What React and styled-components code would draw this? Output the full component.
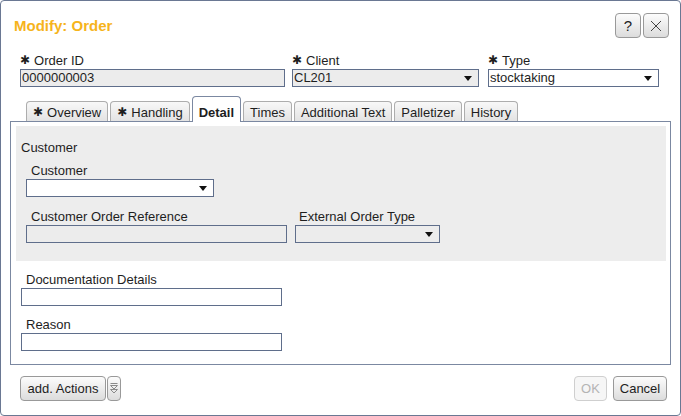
import React from 'react';
import styled, { createGlobalStyle } from 'styled-components';

const EDGE = '#6a7893';
const FIELD_EDGE = '#5f6e8b';

const GlobalStyle = createGlobalStyle`
  html, body {
    margin: 0;
    padding: 0;
    background: #fff;
  }
  body {
    font-family: "Liberation Sans", Arial, sans-serif;
    font-size: 13px;
    color: #1e1e1e;
  }
  * {
    box-sizing: border-box;
  }
`;

const Dialog = styled.div`
  width: 681px;
  height: 416px;
  border: 1px solid ${EDGE};
  border-radius: 4px;
  display: flex;
  flex-direction: column;
  background: #fff;
`;

const Header = styled.div`
  display: flex;
  align-items: center;
  justify-content: space-between;
  height: 37px;
  padding: 12px 11px 0 13px;
`;

const Title = styled.h1`
  margin: 0;
  font-size: 15px;
  font-weight: bold;
  color: #f6b41c;
  line-height: 18px;
`;

const HeaderTools = styled.div`
  display: flex;
  gap: 2px;
`;

const Button = styled.button`
  height: 25px;
  width: ${(p) => p.$w}px;
  padding: 0;
  margin: 0;
  display: flex;
  align-items: center;
  justify-content: center;
  font-family: "Liberation Sans", Arial, sans-serif;
  font-size: ${(p) => (p.$big ? 15 : 13)}px;
  color: ${(p) => (p.disabled ? '#b4b4b4' : '#1e1e1e')};
  border: 1px solid ${(p) => (p.disabled ? '#cfcfcf' : '#999')};
  border-radius: 4px;
  background: ${(p) =>
    p.disabled ? '#f6f6f6' : 'linear-gradient(#fcfcfc, #dcdcdc)'};
`;

const FieldRow = styled.div`
  display: flex;
  margin-top: 15px;
  padding-left: 19px;
`;

const Field = styled.div`
  width: ${(p) => p.$w}px;
  margin-right: ${(p) => p.$mr || 0}px;
  margin-left: ${(p) => p.$ml || 0}px;
  margin-top: ${(p) => p.$mt || 0}px;
`;

const Label = styled.div`
  line-height: 16px;
  height: 16px;
  padding-left: ${(p) => p.$indent || 0}px;
  white-space: nowrap;
`;

const Star = styled.span`
  display: inline-block;
  font-family: "DejaVu Sans", sans-serif;
  font-size: 12px;
  line-height: 12px;
  margin-right: 4px;
  vertical-align: 1px;
`;

const Box = styled.div`
  height: 18px;
  width: ${(p) => p.$w}px;
  border: 1px solid ${FIELD_EDGE};
  background: ${(p) => (p.$gray ? '#ececec' : '#fff')};
  display: flex;
  align-items: center;
  justify-content: space-between;
  padding: 0 6px 0 1px;
  line-height: 16px;
  white-space: nowrap;
`;

const Arrow = styled.span`
  width: 0;
  height: 0;
  border-left: 4px solid transparent;
  border-right: 4px solid transparent;
  border-top: 5px solid #111;
`;

const TabBar = styled.div`
  display: flex;
  align-items: flex-end;
  gap: 2px;
  height: 24px;
  margin-top: 10px;
  padding-left: 25px;
`;

const Tab = styled.div`
  position: relative;
  z-index: ${(p) => (p.$active ? 1 : 0)};
  padding: ${(p) => (p.$active ? '8px 6px 1px' : '3px 6px 0')};
  margin-bottom: ${(p) => (p.$active ? -1 : 0)}px;
  line-height: 16px;
  font-weight: ${(p) => (p.$active ? 'bold' : 'normal')};
  border: 1px solid ${(p) => (p.$active ? '#7b88a1' : '#adadad')};
  border-bottom: none;
  border-radius: 4px 4px 0 0;
  background: ${(p) =>
    p.$active ? '#fff' : 'linear-gradient(#f8f8f8, #e3e3e3)'};
  white-space: nowrap;
`;

const Panel = styled.div`
  flex: 1;
  margin: 0 9px;
  border: 1px solid #7b88a1;
  padding: 4px 4px 0 5px;
`;

const Section = styled.div`
  background: #ededed;
  padding: 14px 4px 18px 5px;
`;

const SectionTitle = styled.div`
  line-height: 16px;
`;

const SubBlock = styled.div`
  padding-left: 5px;
`;

const Row = styled.div`
  display: flex;
  gap: 8px;
  margin-top: ${(p) => p.$mt || 0}px;
`;

const Footer = styled.div`
  height: 50px;
  flex-shrink: 0;
  display: flex;
  align-items: flex-start;
  justify-content: space-between;
  padding: 11px 13px 0 19px;
`;

const ButtonGroup = styled.div`
  display: flex;
  gap: ${(p) => p.$gap}px;
`;

const CloseIcon = () => (
  <svg width="12" height="12" viewBox="0 0 12 12">
    <path d="M1 1 L11 11 M11 1 L1 11" stroke="#444" strokeWidth="1" />
  </svg>
);

const MoreIcon = () => (
  <svg width="8" height="11" viewBox="0 0 8 11">
    <path
      d="M0.5 0.5 H7.5 M0.5 2.5 H7.5 L4 6 Z M0.5 6.5 H7.5 L4 10 Z"
      stroke="#8a8a8a"
      strokeWidth="1"
      strokeLinejoin="round"
      fill="none"
    />
  </svg>
);

const Input = ({ w, gray, value }) => (
  <Box $w={w} $gray={gray}>
    <span>{value}</span>
  </Box>
);

const Select = ({ w, gray, value }) => (
  <Box $w={w} $gray={gray}>
    <span>{value}</span>
    <Arrow />
  </Box>
);

const tabs = [
  { label: 'Overview', required: true },
  { label: 'Handling', required: true },
  { label: 'Detail', active: true },
  { label: 'Times' },
  { label: 'Additional Text' },
  { label: 'Palletizer' },
  { label: 'History' },
];

export default function App() {
  return (
    <>
      <GlobalStyle />
      <Dialog>
        <Header>
          <Title>Modify: Order</Title>
          <HeaderTools>
            <Button $w={26} $big>?</Button>
            <Button $w={26}>
              <CloseIcon />
            </Button>
          </HeaderTools>
        </Header>

        <FieldRow>
          <Field $w={265} $mr={7}>
            <Label>
              <Star>✱</Star>Order ID
            </Label>
            <Input w={265} gray value="0000000003" />
          </Field>
          <Field $w={187} $mr={9}>
            <Label>
              <Star>✱</Star>Client
            </Label>
            <Select w={187} gray value="CL201" />
          </Field>
          <Field $w={171}>
            <Label>
              <Star>✱</Star>Type
            </Label>
            <Select w={171} value="stocktaking" />
          </Field>
        </FieldRow>

        <TabBar>
          {tabs.map((t) => (
            <Tab key={t.label} $active={t.active}>
              {t.required && <Star>✱</Star>}
              {t.label}
            </Tab>
          ))}
        </TabBar>

        <Panel>
          <Section>
            <SectionTitle>Customer</SectionTitle>
            <SubBlock>
              <Field $w={188} $mt={7}>
                <Label $indent={5}>Customer</Label>
                <Select w={188} value="" />
              </Field>
              <Row $mt={12}>
                <Field $w={261}>
                  <Label $indent={5}>Customer Order Reference</Label>
                  <Input w={261} gray value="" />
                </Field>
                <Field $w={145}>
                  <Label $indent={4}>External Order Type</Label>
                  <Select w={145} gray value="" />
                </Field>
              </Row>
            </SubBlock>
          </Section>

          <Field $w={261} $ml={5} $mt={11}>
            <Label $indent={5}>Documentation Details</Label>
            <Input w={261} value="" />
          </Field>
          <Field $w={261} $ml={5} $mt={11}>
            <Label $indent={5}>Reason</Label>
            <Input w={261} value="" />
          </Field>
        </Panel>

        <Footer>
          <ButtonGroup $gap={1}>
            <Button $w={86}>add. Actions</Button>
            <Button $w={14}>
              <MoreIcon />
            </Button>
          </ButtonGroup>
          <ButtonGroup $gap={6}>
            <Button $w={33} disabled>
              OK
            </Button>
            <Button $w={54}>Cancel</Button>
          </ButtonGroup>
        </Footer>
      </Dialog>
    </>
  );
}
